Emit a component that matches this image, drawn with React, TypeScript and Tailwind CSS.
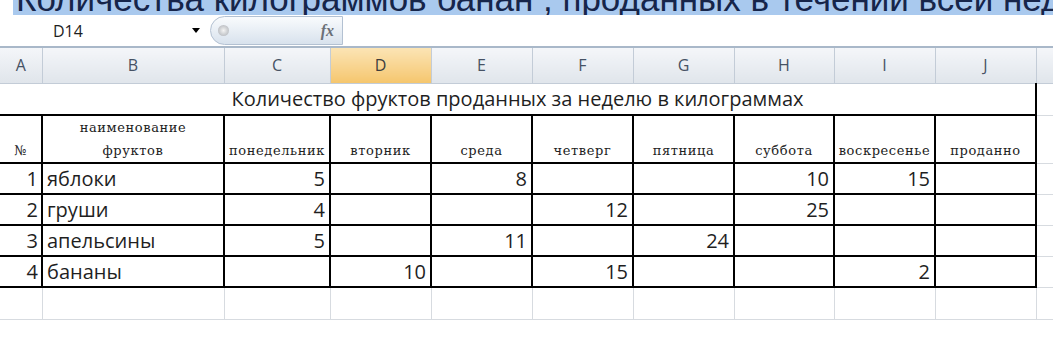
import React from 'react';

const cols = [42, 182, 106, 101, 101, 101, 101, 100, 101, 101, 60];
const letters = ['A', 'B', 'C', 'D', 'E', 'F', 'G', 'H', 'I', 'J', ''];
const days = ['понедельник', 'вторник', 'среда', 'четверг', 'пятница', 'суббота', 'воскресенье', 'проданно'];

// values for columns C..J, empty string = blank cell
const rows: { n: number; name: string; vals: (number | '')[] }[] = [
  { n: 1, name: 'яблоки', vals: [5, '', 8, '', '', 10, 15, ''] },
  { n: 2, name: 'груши', vals: [4, '', '', 12, '', 25, '', ''] },
  { n: 3, name: 'апельсины', vals: [5, '', 11, '', 24, '', '', ''] },
  { n: 4, name: 'бананы', vals: ['', 10, '', 15, '', '', 2, ''] },
];

const sans = 'font-["Open_Sans","Liberation_Sans",sans-serif]';

export default function App() {
  return (
    <div className="w-[1053px] h-[340px] overflow-hidden bg-white">
      {/* highlighted title text from the page above */}
      <div className="h-[15px] overflow-hidden pl-[13px]">
        <div className='-mt-[19px] bg-[#a9c9ee] pl-[3px] leading-[35px] text-[35px] text-[#16254a] whitespace-nowrap font-["Liberation_Sans",Arial,sans-serif]'>
          Количества килограммов банан , проданных в течении всей недели
        </div>
      </div>

      {/* formula bar */}
      <div className="flex h-[33px] items-center border-b-2 border-[#a9b8c9]">
        <div className={`w-[185px] pl-[53px] text-[16px] text-[#1e1e1e] ${sans}`}>D14</div>
        <div className="w-[22px] flex justify-center">
          <div className="w-0 h-0 border-l-[4px] border-r-[4px] border-t-[5px] border-l-transparent border-r-transparent border-t-black" />
        </div>
        <div className="ml-[3px] flex h-[29px] w-[133px] items-center justify-between rounded-l-full border border-[#b3c1d2] bg-gradient-to-b from-[#f9fbfd] to-[#d8e2ed] pl-[7px] pr-[8px]">
          <div className="h-[11px] w-[11px] rounded-full bg-radial from-[#f4f4f4] to-[#a9adb3]" />
          <span className='italic font-bold text-[16px] text-[#6b7078] font-["Liberation_Serif",serif]'>fx</span>
        </div>
        <div className="flex-1 h-full bg-white" />
      </div>

      <table className={`w-[1096px] table-fixed border-collapse ${sans}`}>
        <colgroup>
          {cols.map((w, i) => (
            <col key={i} width={w} />
          ))}
        </colgroup>
        <thead>
          <tr className="h-[35px]">
            {letters.map((l, i) => (
              <th
                key={i}
                className={`p-0 font-normal text-[16px] border-r border-b border-[#c3ccd7] bg-gradient-to-b ${
                  l === 'D'
                    ? 'from-[#fbe4b4] to-[#f5c66d] text-[#3d3d3d]'
                    : 'from-[#f4f6f9] to-[#e0e5eb] text-[#465264]'
                }`}
              >
                {l}
              </th>
            ))}
          </tr>
        </thead>
        <tbody className="text-[20px] text-[#1f1f1f]">
          <tr className="h-[32px]">
            <td colSpan={10} className="p-0 text-center border-r-2 border-b-2 border-black">
              Количество фруктов проданных за неделю в килограммах
            </td>
            <td className="p-0 border-b border-[#d7dbe0]" />
          </tr>
          <tr className='h-[45px] font-["DejaVu_Serif","Liberation_Serif",serif] text-[13px] tracking-[0.6px] text-[#222]'>
            <td className="p-0 text-center align-bottom leading-[22px] border-2 border-l-0 border-black">№</td>
            <td className="p-0 text-center align-bottom leading-[23px] border-2 border-black">
              наименование
              <br />
              фруктов
            </td>
            {days.map((d) => (
              <td key={d} className="p-0 text-center align-bottom leading-[22px] border-2 border-black whitespace-nowrap">
                {d}
              </td>
            ))}
            <td className="p-0 border-b border-[#d7dbe0]" />
          </tr>
          {rows.map((r) => (
            <tr key={r.n} className="h-[31px]">
              <td className="p-0 pr-[3px] leading-[26px] text-right border-2 border-l-0 border-black">{r.n}</td>
              <td className="p-0 pl-[4px] leading-[26px] border-2 border-black">{r.name}</td>
              {r.vals.map((v, i) => (
                <td key={i} className="p-0 pr-[4px] leading-[26px] text-right border-2 border-black">
                  {v}
                </td>
              ))}
              <td className="p-0 border-b border-[#d7dbe0]" />
            </tr>
          ))}
          <tr className="h-[32px]">
            {cols.map((_, i) => (
              <td key={i} className="p-0 border-r border-b border-[#d7dbe0]" />
            ))}
          </tr>
        </tbody>
      </table>
    </div>
  );
}
